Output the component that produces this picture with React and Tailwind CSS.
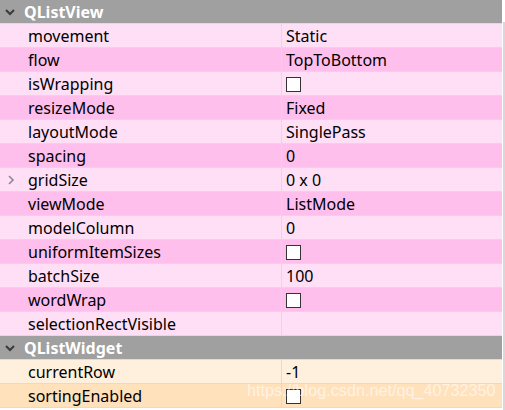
import React from "react";

const Check = () => (
  <div className="w-[15px] h-[15px] border border-[#333] bg-white" />
);

const groups = [
  {
    title: "QListView",
    light: "bg-[#ffdff6]",
    dark: "bg-[#ffbfec]",
    rows: [
      ["movement", "Static"],
      ["flow", "TopToBottom"],
      ["isWrapping", "check"],
      ["resizeMode", "Fixed"],
      ["layoutMode", "SinglePass"],
      ["spacing", "0"],
      ["gridSize", "0 x 0", true],
      ["viewMode", "ListMode"],
      ["modelColumn", "0"],
      ["uniformItemSizes", "check"],
      ["batchSize", "100"],
      ["wordWrap", "check"],
      ["selectionRectVisible", ""],
    ],
  },
  {
    title: "QListWidget",
    light: "bg-[#fff0dd]",
    dark: "bg-[#ffe1bc]",
    rows: [
      ["currentRow", "-1"],
      ["sortingEnabled", "check"],
    ],
  },
];

const ChevronDown = () => (
  <svg width="12" height="12" viewBox="0 0 12 12" className="shrink-0">
    <path d="M2 4 L6 8 L10 4" fill="none" stroke="#3a3a3a" strokeWidth="2" />
  </svg>
);

const ChevronRight = () => (
  <svg width="10" height="12" viewBox="0 0 10 12" className="shrink-0">
    <path d="M3 2 L7 6 L3 10" fill="none" stroke="#8a8a8a" strokeWidth="1.6" />
  </svg>
);

export default function App() {
  return (
    <div className="relative w-[505px] h-[410px] bg-white overflow-hidden text-[16px] text-black" style={{ fontFamily: '"Noto Sans", "Open Sans", sans-serif' }}>
      <div className="w-[502px] flex flex-col">
        {groups.map((g) => (
          <React.Fragment key={g.title}>
            <div className="h-[24px] bg-[#a0a0a0] border-b border-[#dcdcdc] flex items-center pl-[4px] gap-[8px]">
              <ChevronDown />
              <span className="font-bold text-white leading-none">{g.title}</span>
            </div>
            {g.rows.map(([name, val, expand], i) => (
              <div
                key={name}
                className={`h-[24px] flex border-b border-[#dcdcdc] ${i % 2 === 0 ? g.light : g.dark}`}
              >
                <div className="w-[282px] flex items-center pl-[6px] pt-[1px] border-r border-[#dcdcdc] shrink-0">
                  <div className="w-[22px] flex items-center">{expand ? <ChevronRight /> : null}</div>
                  <span className="leading-none">{name}</span>
                </div>
                <div className="flex-1 flex items-center pl-[4px] pt-[1px]">
                  {val === "check" ? <Check /> : <span className="leading-none">{val}</span>}
                </div>
              </div>
            ))}
          </React.Fragment>
        ))}
      </div>
      <div className="absolute right-0 top-[22px] bottom-0 w-[2px] bg-[#d8d8d8]" />
      <div
        className="absolute left-[247px] top-[382px] text-[16.2px] text-white/60 leading-none whitespace-nowrap"
        style={{ fontFamily: '"Liberation Sans", Arial, sans-serif' }}
      >
        https://blog.csdn.net/qq_40732350
      </div>
    </div>
  );
}
